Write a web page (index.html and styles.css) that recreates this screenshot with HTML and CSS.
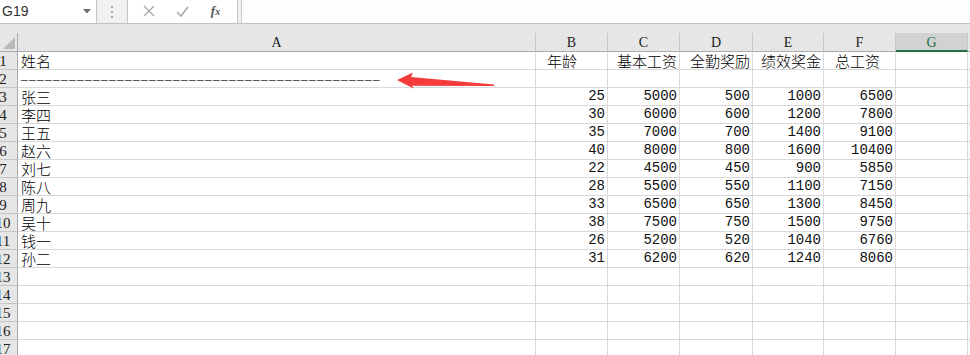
FILE: index.html
```html
<!DOCTYPE html>
<html lang="zh-CN">
  <head>
    <meta charset="UTF-8" />
    <title>工资表</title>
    <link rel="stylesheet" href="styles.css">
  </head>
  <body>
    <!-- [1] Formula bar -->
    <div class="formula-bar">
      <div class="name-box">
        <span>G19</span>
        <svg width="8" height="5" viewBox="0 0 8 5" aria-hidden="true">
          <path d="M0 0h8L4 4.5z" fill="#6d6d6d" />
        </svg>
      </div>
      <div class="grip"><i></i><i></i><i></i></div>
      <div class="fx-buttons">
        <svg width="12" height="12" viewBox="0 0 12 12" aria-hidden="true">
          <path d="M1 1l10 10M11 1L1 11" stroke="#a6a6a6" stroke-width="1.3" fill="none" />
        </svg>
        <svg width="13" height="11" viewBox="0 0 13 11" aria-hidden="true">
          <path d="M1 6l4 4L12 1" stroke="#a6a6a6" stroke-width="1.5" fill="none" />
        </svg>
        <span class="fx">f<small>x</small></span>
      </div>
      <div class="formula-input"></div>
    </div>

    <div class="strip"></div>

    <!-- [2] Sheet -->
    <div class="sheet">
      <div class="row head">
        <div class="corner">
          <svg width="12" height="12" viewBox="0 0 12 12" aria-hidden="true">
            <path d="M12 0v12H0z" fill="#b9b9b9" />
          </svg>
        </div>
        <div class="col">A</div>
        <div class="col">B</div>
        <div class="col">C</div>
        <div class="col">D</div>
        <div class="col">E</div>
        <div class="col">F</div>
        <div class="col selected">G</div>
        <div class="col">H</div>
      </div>

      <div class="row">
        <div class="rh"><span>1</span></div>
        <div class="cell text">姓名</div>
        <div class="cell text pad-b">年龄</div>
        <div class="cell text right">基本工资</div>
        <div class="cell text right">全勤奖励</div>
        <div class="cell text right">绩效奖金</div>
        <div class="cell text pad-f">总工资</div>
        <div class="cell"></div>
        <div class="cell"></div>
      </div>

      <div class="row">
        <div class="rh"><span>2</span></div>
        <div class="cell dashes">–––––––––––––––––––––––––––––––––––––––––––––</div>
        <div class="cell"></div>
        <div class="cell"></div>
        <div class="cell"></div>
        <div class="cell"></div>
        <div class="cell"></div>
        <div class="cell"></div>
        <div class="cell"></div>
      </div>

      <div id="rows"></div>
    </div>

    <!-- [3] Annotation arrow -->
    <svg class="arrow" width="970" height="355" viewBox="0 0 970 355" aria-hidden="true">
      <path d="M397 80 L413 72.5 L411 77 L494 84.6 L494 86 L412 85.8 L414 88.8 Z" fill="#f53c3c" />
    </svg>

    <script>
      (function () {
        const data = [
          ["张三", 25, 5000, 500, 1000, 6500],
          ["李四", 30, 6000, 600, 1200, 7800],
          ["王五", 35, 7000, 700, 1400, 9100],
          ["赵六", 40, 8000, 800, 1600, 10400],
          ["刘七", 22, 4500, 450, 900, 5850],
          ["陈八", 28, 5500, 550, 1100, 7150],
          ["周九", 33, 6500, 650, 1300, 8450],
          ["吴十", 38, 7500, 750, 1500, 9750],
          ["钱一", 26, 5200, 520, 1040, 6760],
          ["孙二", 31, 6200, 620, 1240, 8060],
        ];

        const row = (n, values) => {
          const [name, ...nums] = values || ["", "", "", "", "", ""];
          return `
            <div class="row">
              <div class="rh"><span>${n}</span></div>
              <div class="cell text">${name}</div>
              ${nums.map((v) => `<div class="cell num">${v}</div>`).join("")}
              <div class="cell"></div>
              <div class="cell"></div>
            </div>
          `;
        };

        let html = "";
        data.forEach((d, i) => (html += row(i + 3, d)));
        for (let n = 13; n <= 17; n++) html += row(n);

        document.getElementById("rows").innerHTML = html;
      })();
    </script>
  </body>
</html>
```

FILE: styles.css
```css
* {
  margin: 0;
  padding: 0;
  box-sizing: border-box;
}
:root {
  --grid: #d9d9d9;
  --head: #e6e6e6;
  --head-line: #c6c6c6;
  --green: #217346;
}
body {
  width: 970px;
  height: 355px;
  overflow: hidden;
  position: relative;
  background-color: #fff;
  font-family: "Liberation Sans", sans-serif;
}

/* [1] Formula bar */
.formula-bar {
  height: 24px;
  display: flex;
  background-color: #f1f1f1;
  border-bottom: 1px solid #c2c2c2;
}
.name-box {
  width: 97px;
  display: flex;
  align-items: center;
  justify-content: space-between;
  padding: 0 5px 1px 2px;
  background-color: #fff;
  border-right: 1px solid #c6c6c6;
  color: #333;
  font-size: 14px;
}
.grip {
  width: 30px;
  gap: 3px;
  display: flex;
  align-items: center;
  flex-direction: column;
  justify-content: center;
}
.grip i {
  width: 2px;
  height: 2px;
  background-color: #a8a8a8;
}
.fx-buttons {
  width: 111px;
  display: flex;
  align-items: center;
  justify-content: space-around;
  padding: 0 6px 1px 4px;
  background-color: #fff;
  border-left: 1px solid #c6c6c6;
  border-right: 1px solid #c6c6c6;
}
.fx {
  color: #555;
  font-size: 13px;
  font-style: italic;
  font-weight: 700;
  font-family: "Liberation Serif", serif;
}
.fx small {
  font-size: 10px;
}
.formula-input {
  flex: 1;
  margin-left: 3px;
  background-color: #fdfdfd;
  border-left: 1px solid #c6c6c6;
}
.strip {
  height: 9px;
  background-color: var(--head);
}

/* [2] Sheet grid */
.row {
  height: 18px;
  display: grid;
  grid-template-columns: 18px 518px 72px 72px 73px 71px 72px 72px 72px;
}
.row > div {
  overflow: hidden;
  white-space: nowrap;
  border-right: 1px solid var(--grid);
  border-bottom: 1px solid var(--grid);
}
.row.head {
  height: 19px;
  background-color: var(--head);
}
.row.head > div {
  border-right-color: var(--head-line);
  border-bottom-color: #ababab;
}
.corner {
  display: flex;
  align-items: flex-end;
  justify-content: flex-end;
  padding: 0 2px 2px 0;
}
.row.head .corner {
  border-right-color: #ababab;
}
.col {
  color: #222;
  font-size: 14px;
  line-height: 19px;
  text-align: center;
  font-family: "Liberation Serif", serif;
}
.row.head .col.selected {
  color: var(--green);
  background-color: #d2d2d2;
  border-bottom: 2px solid var(--green);
}
.rh {
  color: #222;
  font-size: 15px;
  line-height: 18px;
  background-color: var(--head);
  font-family: "Liberation Serif", serif;
}
/* the header is scrolled: two-digit numbers lose their first digit */
.rh span {
  width: 30px;
  margin-left: -12px;
  text-align: center;
  display: inline-block;
}
.row > .rh {
  border-right-color: #ababab;
  border-bottom-color: var(--head-line);
}

/* [3] Cell content */
.cell {
  color: #000;
  line-height: 17px;
}
.cell.text {
  font-size: 15px;
  font-weight: 300;
  padding-left: 3px;
  font-family: "Noto Sans CJK SC", sans-serif;
}
.cell.text.right {
  padding: 0 2px 0 0;
  text-align: right;
}
.cell.text.pad-b {
  padding-left: 11px;
}
.cell.text.pad-f {
  padding-left: 11px;
}
.cell.num {
  color: #111;
  font-size: 14px;
  text-align: right;
  padding-right: 2px;
  font-family: "Liberation Mono", monospace;
}
.cell.dashes {
  font-size: 13px;
  padding-left: 3px;
  letter-spacing: 1.5px;
  font-family: "Liberation Serif", serif;
}

/* [4] Annotation */
.arrow {
  top: 0;
  left: 0;
  position: absolute;
  pointer-events: none;
}
```
